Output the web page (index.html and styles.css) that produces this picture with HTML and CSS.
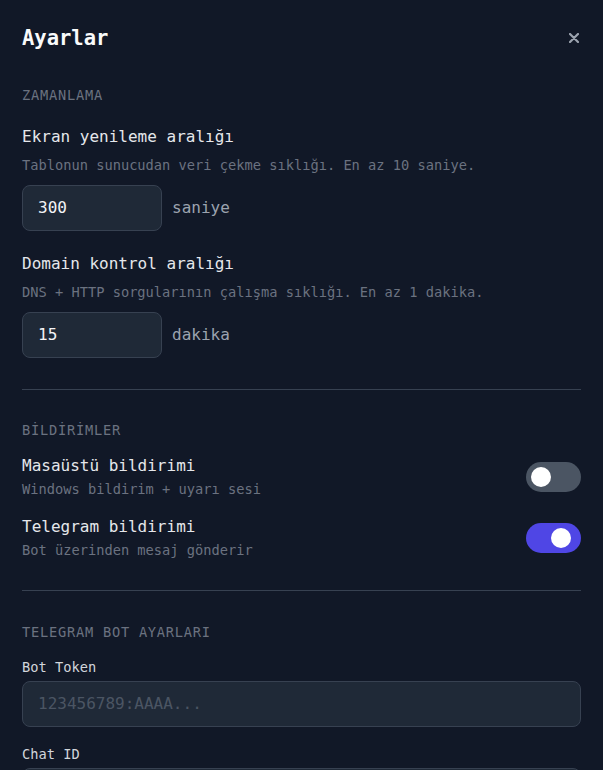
FILE: index.html
```html
<!DOCTYPE html>
<html lang="tr">

<head>
    <meta charset="UTF-8">
    <meta name="viewport" content="width=device-width, initial-scale=1.0">
    <title>Ayarlar</title>
    <link rel="stylesheet" href="styles.css">
</head>

<body>
    <div id="settings">
        <div class="settings-header">
            <h1>Ayarlar</h1>
            <button class="close-btn" aria-label="Kapat">
                <svg width="10" height="10" viewBox="0 0 10 10">
                    <path d="M1 1 L9 9 M9 1 L1 9" stroke="currentColor" stroke-width="2.2" stroke-linecap="round" />
                </svg>
            </button>
        </div>

        <!-- zamanlama -->
        <div class="section section-first">
            <div class="section-title">Zamanlama</div>
            <div class="field">
                <div class="field-label">Ekran yenileme aralığı</div>
                <div class="field-hint">Tablonun sunucudan veri çekme sıklığı. En az 10 saniye.</div>
                <div class="num-row">
                    <input class="text-input num-input" type="text" value="300">
                    <span class="unit">saniye</span>
                </div>
            </div>
            <div class="field">
                <div class="field-label">Domain kontrol aralığı</div>
                <div class="field-hint">DNS + HTTP sorgularının çalışma sıklığı. En az 1 dakika.</div>
                <div class="num-row">
                    <input class="text-input num-input" type="text" value="15">
                    <span class="unit">dakika</span>
                </div>
            </div>
        </div>

        <!-- bildirimler -->
        <div class="section">
            <div class="section-title">Bildirimler</div>
            <div class="toggle-row">
                <div>
                    <div class="toggle-label">Masaüstü bildirimi</div>
                    <div class="toggle-hint">Windows bildirim + uyarı sesi</div>
                </div>
                <div class="toggle" onclick="this.classList.toggle('on')"><div class="knob"></div></div>
            </div>
            <div class="toggle-row">
                <div>
                    <div class="toggle-label">Telegram bildirimi</div>
                    <div class="toggle-hint">Bot üzerinden mesaj gönderir</div>
                </div>
                <div class="toggle on" onclick="this.classList.toggle('on')"><div class="knob"></div></div>
            </div>
        </div>

        <!-- telegram bot -->
        <div class="section section-last">
            <div class="section-title">Telegram Bot Ayarları</div>
            <div class="bot-field">
                <label class="small-label">Bot Token</label>
                <input class="text-input wide-input" type="text" placeholder="123456789:AAAA...">
            </div>
            <div class="bot-field">
                <label class="small-label">Chat ID</label>
                <input class="text-input wide-input" type="text" placeholder="">
            </div>
        </div>
    </div>
</body>

</html>
```

FILE: styles.css
```css
body,
html {
    margin: 0;
    padding: 0;
    height: 100%;
    overflow: hidden;
    background-color: #111827;
    font-family: "DejaVu Sans Mono", "Liberation Mono", monospace;
}

#settings {
    padding: 0 22px;
    color: #e5e7eb;
}

.settings-header {
    display: flex;
    justify-content: space-between;
    align-items: center;
    padding-top: 24px;
}

.settings-header h1 {
    margin: 0;
    font-size: 20.5px;
    line-height: 28px;
    font-weight: bold;
    color: #f9fafb;
}

.close-btn {
    background: none;
    border: none;
    padding: 0;
    margin-right: 2px;
    color: #9ca3af;
    display: flex;
    cursor: pointer;
}

.section {
    padding: 30px 0;
    border-bottom: 1px solid #374151;
}

.section-first {
    padding-top: 33px;
    padding-bottom: 31px;
}

.section-last {
    border-bottom: none;
    padding-top: 31px;
}

.section-title {
    font-size: 13.7px;
    line-height: 20px;
    letter-spacing: 0.75px;
    text-transform: uppercase;
    color: #6b7280;
    margin-bottom: 15px;
}

.section-first .section-title {
    margin-bottom: 19.5px;
}

.field + .field {
    margin-top: 21px;
}

.field-label {
    font-size: 16px;
    line-height: 24px;
    color: #e5e7eb;
}

.field-hint {
    font-size: 13.7px;
    line-height: 20px;
    color: #6b7280;
    margin-top: 6px;
}

.num-row {
    display: flex;
    align-items: center;
    margin-top: 10px;
}

.text-input {
    box-sizing: border-box;
    height: 46px;
    background-color: #1f2937;
    border: 1px solid #374151;
    border-radius: 8px;
    padding: 0 15px;
    font-family: inherit;
    font-size: 16px;
    color: #f3f4f6;
    outline: none;
}

.text-input::placeholder {
    color: #4b5563;
}

.num-input {
    width: 140px;
}

.unit {
    margin-left: 10px;
    font-size: 16px;
    color: #9ca3af;
}

.toggle-row {
    display: flex;
    justify-content: space-between;
    align-items: center;
}

.toggle-row + .toggle-row {
    margin-top: 17px;
}

.toggle-label {
    font-size: 16px;
    line-height: 22px;
    color: #e5e7eb;
}

.toggle-hint {
    font-size: 13.7px;
    line-height: 20px;
    color: #6b7280;
    margin-top: 2px;
}

.toggle {
    position: relative;
    width: 55px;
    height: 30px;
    border-radius: 15px;
    background-color: #4b5563;
    cursor: pointer;
    flex-shrink: 0;
}

.toggle.on {
    background-color: #4f46e5;
}

.knob {
    position: absolute;
    top: 5px;
    left: 5px;
    width: 20px;
    height: 20px;
    border-radius: 50%;
    background-color: #ffffff;
    transition: transform 0.15s;
}

.toggle.on .knob {
    transform: translateX(20px);
}

.bot-field + .bot-field {
    margin-top: 17px;
}

.small-label {
    display: block;
    font-size: 13.7px;
    line-height: 20px;
    color: #d1d5db;
    margin-bottom: 4px;
}

.wide-input {
    width: 100%;
}
```
